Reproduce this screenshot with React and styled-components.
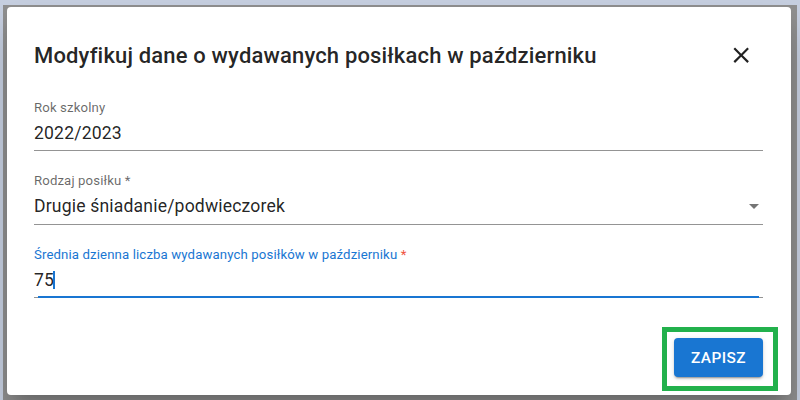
import React from "react";
import styled, { createGlobalStyle } from "styled-components";

const GlobalStyle = createGlobalStyle`
  html, body {
    margin: 0;
    padding: 0;
    width: 800px;
    height: 400px;
    overflow: hidden;
    background: #c6cfe0;
    font-family: Roboto, "Noto Sans", Arial, sans-serif;
  }
`;

const Backdrop = styled.div`
  box-sizing: border-box;
  margin: 5px 3px 0 3px;
  height: 395px;
  padding: 2px 6px 5px 4px;
  background: #8f8f8f;
`;

const Dialog = styled.div`
  box-sizing: border-box;
  height: 100%;
  display: flex;
  flex-direction: column;
  padding: 32.5px 28px 18px 27px;
  background: #fff;
  border-radius: 4px;
  box-shadow: 0 11px 15px -7px rgba(0, 0, 0, 0.2),
    0 24px 38px 3px rgba(0, 0, 0, 0.14);
`;

const TitleRow = styled.div`
  display: flex;
  align-items: center;
  justify-content: space-between;
  height: 32px;
`;

const Title = styled.h2`
  margin: 0;
  font-size: 22px;
  line-height: 32px;
  font-weight: 500;
  letter-spacing: 0.0075em;
  color: rgba(0, 0, 0, 0.87);
`;

const CloseButton = styled.button`
  width: 44px;
  height: 44px;
  margin: -6px 0;
  padding: 0;
  display: flex;
  align-items: center;
  justify-content: center;
  border: 0;
  border-radius: 50%;
  background: transparent;
  color: rgba(0, 0, 0, 0.87);
  cursor: pointer;

  svg {
    width: 26.4px;
    height: 26.4px;
    fill: currentColor;
  }
`;

const Form = styled.div`
  display: flex;
  flex-direction: column;
  gap: 22px;
  margin-top: 28px;
`;

const Field = styled.div`
  display: flex;
  flex-direction: column;
`;

const Label = styled.label`
  font-size: 13.2px;
  line-height: 16px;
  letter-spacing: 0.00938em;
  color: ${props => (props.focused ? "#1976d2" : "rgba(0, 0, 0, 0.6)")};
`;

const Asterisk = styled.span`
  color: ${props => (props.focused ? "#f0533f" : "inherit")};
`;

const InputRow = styled.div`
  position: relative;
  display: flex;
  align-items: center;
  height: 24px;
  margin-top: 5px;
  padding-bottom: 5.5px;
  border-bottom: 1px solid rgba(0, 0, 0, 0.42);
  font-size: 17.6px;
  line-height: 24px;
  letter-spacing: 0.00938em;
  color: rgba(0, 0, 0, 0.87);

  &::after {
    content: "";
    display: ${props => (props.focused ? "block" : "none")};
    position: absolute;
    left: 3.5px;
    right: 4px;
    bottom: -1px;
    height: 2px;
    background: #1976d2;
  }
`;

const Value = styled.span`
  flex: 1;
  white-space: nowrap;
`;

const Caret = styled.span`
  display: inline-block;
  width: 2px;
  height: 18px;
  margin-left: -1.5px;
  vertical-align: -3px;
  background: #1976d2;
`;

const DropArrow = styled.svg`
  width: 10px;
  height: 5px;
  margin-right: 4px;
  fill: rgba(0, 0, 0, 0.54);
`;

const Actions = styled.div`
  margin-top: auto;
  display: flex;
  justify-content: flex-end;
`;

const Highlight = styled.div`
  position: relative;

  &::after {
    content: "";
    position: absolute;
    top: -11px;
    left: -12px;
    right: -15px;
    bottom: -14px;
    border: 5px solid #22b14c;
    pointer-events: none;
  }
`;

const SaveButton = styled.button`
  height: 39px;
  padding: 0 17px;
  border: 0;
  border-radius: 4px;
  background: #1976d2;
  color: #fff;
  font-family: Roboto, "Noto Sans", Arial, sans-serif;
  font-size: 15.4px;
  font-weight: 500;
  letter-spacing: 0.02857em;
  text-transform: uppercase;
  box-shadow: 0 3px 1px -2px rgba(0, 0, 0, 0.2),
    0 2px 2px 0 rgba(0, 0, 0, 0.14), 0 1px 5px 0 rgba(0, 0, 0, 0.12);
  cursor: pointer;
`;

const TextField = ({ label, value, required, focused, select }) => (
  <Field>
    <Label focused={focused}>
      {label}
      {required && <Asterisk focused={focused}> *</Asterisk>}
    </Label>
    <InputRow focused={focused}>
      <Value>
        {value}
        {focused && <Caret />}
      </Value>
      {select && (
        <DropArrow viewBox="0 0 10 5">
          <path d="M0 0l5 5 5-5z" />
        </DropArrow>
      )}
    </InputRow>
  </Field>
);

const App = () => (
  <>
    <GlobalStyle />
    <Backdrop>
      <Dialog>
        <TitleRow>
          <Title>Modyfikuj dane o wydawanych posiłkach w październiku</Title>
          <CloseButton aria-label="Zamknij">
            <svg viewBox="0 0 24 24">
              <path d="M19 6.41 17.59 5 12 10.59 6.41 5 5 6.41 10.59 12 5 17.59 6.41 19 12 13.41 17.59 19 19 17.59 13.41 12z" />
            </svg>
          </CloseButton>
        </TitleRow>
        <Form>
          <TextField label="Rok szkolny" value="2022/2023" />
          <TextField
            label="Rodzaj posiłku"
            value="Drugie śniadanie/podwieczorek"
            required
            select
          />
          <TextField
            label="Średnia dzienna liczba wydawanych posiłków w październiku"
            value="75"
            required
            focused
          />
        </Form>
        <Actions>
          <Highlight>
            <SaveButton>Zapisz</SaveButton>
          </Highlight>
        </Actions>
      </Dialog>
    </Backdrop>
  </>
);

export default App;
